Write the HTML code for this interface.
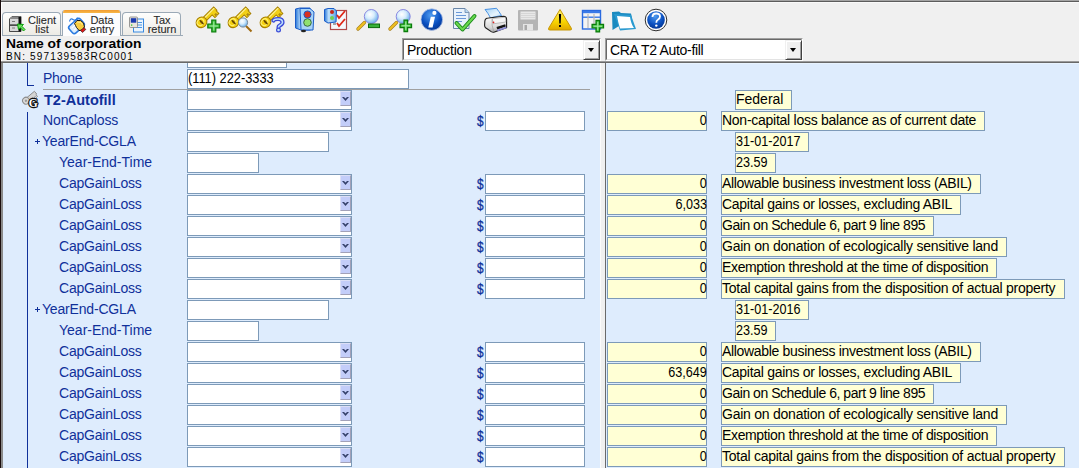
<!DOCTYPE html><html><head><meta charset="utf-8"><style>
*{margin:0;padding:0;box-sizing:border-box}
html,body{width:1079px;height:468px;overflow:hidden;background:#f0f0f0;font-family:"Liberation Sans",sans-serif;position:relative}
.a{position:absolute}
.lbl{position:absolute;color:#10309a;font-size:14px;line-height:18px;white-space:nowrap}
.inp{position:absolute;left:187px;background:#fff;border:1px solid #7d9ab8;height:20px;font-size:13px;line-height:17px;color:#000;white-space:nowrap}
.cmb{position:absolute;background:#fff;border:1px solid #7d9ab8;height:20px;width:165px;left:187px}
.cmb .btn{position:absolute;left:152px;top:0px;width:11px;height:15px;background:#c3cdf9;border-left:1px solid #dcdff6;border-top:1px solid #dcdff6;border-right:1px solid #a2a1b8;border-bottom:1px solid #a2a1b8}

.dol{position:absolute;left:477px;font-size:14.5px;font-weight:normal;-webkit-text-stroke:0.3px #10309a;color:#10309a;line-height:18px;transform:scaleX(0.82);transform-origin:0 0}
.usd{position:absolute;left:485px;width:100px;height:20px;background:#fff;border:1px solid #7d9ab8}
.yv{position:absolute;left:607px;width:100px;height:20px;background:#ffffd5;border:1px solid #7d9ab8;font-size:14px;line-height:16px;text-align:right;padding-right:0;color:#000}
.yl{position:absolute;height:20px;background:#ffffd5;border:1px solid #7d9ab8;font-size:14px;line-height:16px;padding-left:0;color:#000;white-space:nowrap}
.yd .s{display:inline-block;transform:scaleX(0.9);transform-origin:0 0}
.dd{position:absolute;top:38px;height:23px;border-top:1px solid #a0a0a0;border-left:1px solid #a0a0a0;border-right:1px solid #fff;border-bottom:1px solid #fff}
.dd .in{position:absolute;left:0;top:0;right:0;bottom:0;border-top:1px solid #696969;border-left:1px solid #696969;border-right:1px solid #e3e3e3;border-bottom:1px solid #e3e3e3;background:#fff;font-size:14px;line-height:18px;padding-left:3px;padding-top:1px;color:#000;white-space:nowrap}
.dd .b{position:absolute;right:-1px;top:0;width:17px;bottom:-1px;background:#f0f0f0;border-top:1px solid #f0f0f0;border-left:1px solid #f0f0f0;border-right:1px solid #404040;border-bottom:1px solid #404040;box-shadow:inset 1px 1px 0 #fff,inset -1px -1px 0 #a0a0a0}
.dd .b i{position:absolute;left:4px;top:7px;width:0;height:0;border-left:3.5px solid transparent;border-right:3.5px solid transparent;border-top:4px solid #000}
.tab{position:absolute;top:12px;height:24px;border:1px solid #9ba9b6;border-bottom:none;border-radius:4px 4px 0 0;background:linear-gradient(#fefefd,#eceae4)}
.tt{position:absolute;width:40px;text-align:center;font-size:11px;line-height:9px;color:#2a2a2a;white-space:nowrap;-webkit-text-stroke:0.1px #2a2a2a}
</style></head><body><div class="a" style="left:0;top:0;width:1079px;height:1px;background:#a4a4a4"></div><div class="a" style="left:0;top:1px;width:1079px;height:1px;background:#5c5c5c"></div><div class="a" style="left:0;top:2px;width:1079px;height:1px;background:#fafafa"></div><div class="tab" style="left:2px;width:59px"></div><div class="tab" style="left:122px;width:59px"></div><div class="a" style="left:2px;top:35px;width:181px;height:1px;background:#9ba9b6"></div><div class="tab" style="left:62px;top:10px;height:26px;width:59px;border-top:none;border-radius:3px 3px 0 0;background:#fdfdfe;overflow:hidden"><div class="a" style="left:0;top:0;width:57px;height:3px;background:linear-gradient(#f09a30,#f8b848)"></div></div><div class="tt" style="left:22px;top:16px">Client<br>list</div><div class="tt" style="left:82px;top:16px">Data<br>entry</div><div class="tt" style="left:142px;top:16px">Tax<br>return</div><div class="a" style="left:6px;top:37px;font-size:12.5px;font-weight:bold;color:#000;line-height:14px;white-space:nowrap;transform:scaleX(1.109);transform-origin:0 0">Name of corporation</div><div class="a" style="left:6px;top:51px;font-size:10px;color:#000;line-height:11px;white-space:nowrap;letter-spacing:1.15px;transform-origin:0 0">BN: 597139583RC0001</div><div class="dd" style="left:402px;width:199px"><div class="in"><span style="letter-spacing:-0.22px">Production</span><div class="b"><i></i></div></div></div><div class="dd" style="left:605px;width:198px"><div class="in"><span style="letter-spacing:-0.33px">CRA T2 Auto-fill</span><div class="b"><i></i></div></div></div><div class="a" style="left:0;top:61px;width:1079px;height:1px;background:#9a9a9a"></div><div class="a" style="left:0;top:62px;width:1079px;height:1px;background:#686868"></div><svg class="a" style="left:0;top:0" width="700" height="40" viewBox="0 0 700 40"><defs><radialGradient id="lens" cx=".4" cy=".35" r=".7"><stop offset="0" stop-color="#ffffff"/><stop offset=".45" stop-color="#d6ecfc"/><stop offset="1" stop-color="#5aa6e8"/></radialGradient><radialGradient id="blueball" cx=".45" cy=".3" r=".75"><stop offset="0" stop-color="#4f9cf0"/><stop offset=".6" stop-color="#0a4fc0"/><stop offset="1" stop-color="#06348c"/></radialGradient><linearGradient id="warn" x1="0" y1="0" x2="0" y2="1"><stop offset="0" stop-color="#fff27a"/><stop offset=".6" stop-color="#f8d400"/><stop offset="1" stop-color="#e0a800"/></linearGradient><linearGradient id="tl" x1="0" y1="0" x2="1" y2="0"><stop offset="0" stop-color="#2a78d8"/><stop offset=".35" stop-color="#bfe0fb"/><stop offset="1" stop-color="#5fa6e6"/></linearGradient><linearGradient id="paper" x1="0" y1="0" x2="1" y2="1"><stop offset="0" stop-color="#9fd0f6"/><stop offset=".6" stop-color="#e6f4fd"/><stop offset="1" stop-color="#bfe0f8"/></linearGradient><linearGradient id="pbody" x1="0" y1="0" x2="0" y2="1"><stop offset="0" stop-color="#ffffff"/><stop offset=".7" stop-color="#d8d8d8"/><stop offset="1" stop-color="#a8a8a8"/></linearGradient></defs><g transform="translate(201.5,22.3) rotate(-45)">
<path d="M3 -2.3 H19.5 V2.3 H18.5 V6 H16.3 V4 H15 V6.2 H12.8 V2.3 H3 Z" fill="#f2d018" stroke="#a88000" stroke-width="1"/>
<path d="M4 -1 H19" stroke="#fff39a" stroke-width="1.1"/>
<ellipse cx="0" cy="0" rx="5.6" ry="5.1" fill="#f4d010" stroke="#a88000" stroke-width="1.1"/>
<ellipse cx="-0.6" cy="-0.8" rx="3.6" ry="3" fill="none" stroke="#fff27a" stroke-width="1"/>
<ellipse cx="0.2" cy="0" rx="1.1" ry="2.9" fill="#6a4a00"/>
</g><path d="M211.8 20.0 H215.8 V24.0 H219.8 V28.0 H215.8 V32.0 H211.8 V28.0 H207.8 V24.0 H211.8 Z" fill="#3cc03c" stroke="#0a7a0a" stroke-width="1.2"/><path d="M213.8 21.5 V30.5 M209.3 26 H218.3" stroke="#c8f8c8" stroke-width="1" opacity=".8"/><g transform="translate(233.5,22.3) rotate(-45)">
<path d="M3 -2.3 H19.5 V2.3 H18.5 V6 H16.3 V4 H15 V6.2 H12.8 V2.3 H3 Z" fill="#f2d018" stroke="#a88000" stroke-width="1"/>
<path d="M4 -1 H19" stroke="#fff39a" stroke-width="1.1"/>
<ellipse cx="0" cy="0" rx="5.6" ry="5.1" fill="#f4d010" stroke="#a88000" stroke-width="1.1"/>
<ellipse cx="-0.6" cy="-0.8" rx="3.6" ry="3" fill="none" stroke="#fff27a" stroke-width="1"/>
<ellipse cx="0.2" cy="0" rx="1.1" ry="2.9" fill="#6a4a00"/>
</g><line x1="246" y1="26" x2="251.5" y2="31.5" stroke="#a06a10" stroke-width="2"/><circle cx="243" cy="22.5" r="4.6" fill="url(#lens)" stroke="#7a8a98" stroke-width="1"/><g transform="translate(265.5,22.3) rotate(-45)">
<path d="M3 -2.3 H19.5 V2.3 H18.5 V6 H16.3 V4 H15 V6.2 H12.8 V2.3 H3 Z" fill="#f2d018" stroke="#a88000" stroke-width="1"/>
<path d="M4 -1 H19" stroke="#fff39a" stroke-width="1.1"/>
<ellipse cx="0" cy="0" rx="5.6" ry="5.1" fill="#f4d010" stroke="#a88000" stroke-width="1.1"/>
<ellipse cx="-0.6" cy="-0.8" rx="3.6" ry="3" fill="none" stroke="#fff27a" stroke-width="1"/>
<ellipse cx="0.2" cy="0" rx="1.1" ry="2.9" fill="#6a4a00"/>
</g><path d="M273.5 20.5 Q274 19 278 19 Q282.5 19 282.5 22.3 Q282.5 24.2 280 25.3 Q278.5 26 278.5 27.3" fill="none" stroke="#3a4ad8" stroke-width="4.2" stroke-linecap="round"/><path d="M273.5 20.5 Q274 19 278 19 Q282.5 19 282.5 22.3 Q282.5 24.2 280 25.3 Q278.5 26 278.5 27.3" fill="none" stroke="#bfe0fb" stroke-width="1.6" stroke-linecap="round"/><circle cx="278.5" cy="30" r="1.9" fill="#bfe0fb" stroke="#3a4ad8" stroke-width="1.2"/><path d="M295.5 9 L300 8 L310 8 L310.5 30 L301 30 L295.5 28 Z" fill="url(#tl)" stroke="#1a5cc8" stroke-width="1"/><path d="M300 8.5 L310 8.5 L314 12 L313 30 L301 30 Z" fill="#a8d4f8" stroke="#1a5cc8" stroke-width="1"/><circle cx="307.5" cy="14.5" r="3.6" fill="#d83020" stroke="#1a5cc8" stroke-width="1"/><circle cx="307.5" cy="22.5" r="3.8" fill="#90e070" stroke="#3a6a40" stroke-width="1"/><ellipse cx="303.5" cy="31" rx="2.5" ry="1.3" fill="#222"/><rect x="330.5" y="10.5" width="16" height="19" fill="#f4f8fc" stroke="#b04848" stroke-width="1.2"/><path d="M324.5 9.5 L328 8.5 L334 8.5 L336.5 11 L336 22 L328 23 L324.5 21 Z" fill="url(#tl)" stroke="#1a5cc8" stroke-width="1"/><circle cx="332" cy="12" r="2" fill="#c82818"/><circle cx="332" cy="18" r="2" fill="#70d050"/><path d="M337 15 L339 18 L345 11 M337 23 L339 26 L345 19" fill="none" stroke="#e02818" stroke-width="1.8"/><path d="M333 24 H336" stroke="#505050" stroke-width="1"/><line x1="364.5" y1="22.5" x2="358" y2="29" stroke="#a88020" stroke-width="3.4" stroke-linecap="round"/><line x1="364.5" y1="22.5" x2="358" y2="29" stroke="#f0c020" stroke-width="2" stroke-linecap="round"/><circle cx="371.3" cy="16.5" r="7" fill="url(#lens)" stroke="#8a88e0" stroke-width="1"/><rect x="368.5" y="24" width="11" height="3.6" fill="#38b038" stroke="#0a6a0a" stroke-width="1"/><line x1="396.5" y1="22.5" x2="390" y2="29" stroke="#a88020" stroke-width="3.4" stroke-linecap="round"/><line x1="396.5" y1="22.5" x2="390" y2="29" stroke="#f0c020" stroke-width="2" stroke-linecap="round"/><circle cx="403.2" cy="16.5" r="7" fill="url(#lens)" stroke="#8a88e0" stroke-width="1"/><path d="M404.0 20.05 H407.6 V24.0 H411.55 V27.6 H407.6 V31.55 H404.0 V27.6 H400.05 V24.0 H404.0 Z" fill="#3cc03c" stroke="#0a7a0a" stroke-width="1.2"/><path d="M405.8 21.55 V30.05 M401.55 25.8 H410.05" stroke="#c8f8c8" stroke-width="1" opacity=".8"/><circle cx="431.8" cy="19.6" r="10.8" fill="url(#blueball)" stroke="#b8c8e8" stroke-width=".8"/><path d="M430.8 16.8 L435 16.8 L432.6 27.6 L428.3 27.6 Z" fill="#fff"/><circle cx="434.4" cy="12.9" r="2.1" fill="#fff"/><path d="M453.5 8.5 L465 8.5 L469 12.5 L469 28.5 L453.5 28.5 Z" fill="#e8f2fc" stroke="#6a86a8" stroke-width="1"/><path d="M465 8.5 L465 12.5 L469 12.5" fill="#b8d8f4" stroke="#6a86a8" stroke-width=".8"/><path d="M456 12.5 H462 M456 15.5 H466 M456 18.5 H466 M456 21.5 H462" stroke="#6a98d8" stroke-width="1"/><path d="M456.5 23 L462.5 29.5 L474.5 16" fill="none" stroke="#1a8a1a" stroke-width="4" stroke-linecap="round" stroke-linejoin="round"/><path d="M456.5 23 L462.5 29.5 L474.5 16" fill="none" stroke="#6ad850" stroke-width="2" stroke-linecap="round" stroke-linejoin="round"/><g transform="translate(480 4)"><path d="M5 5.5 L16.5 4.3 Q19 7.5 21.5 11.5 L10.5 13.8 Q8 9 5 5.5 Z" fill="url(#paper)" stroke="#3a88e0" stroke-width=".9"/><path d="M4.8 17.5 Q5 14.2 8.5 14 L23.5 12.3 Q26.5 12.3 26.6 15.5 L26.6 23.6 L14.5 28 Q12.8 28.6 11.2 27.6 L5.6 23.8 Q4.6 23 4.6 21.2 Z" fill="url(#pbody)" stroke="#1c1c1c" stroke-width="1.1"/><path d="M12.3 14.6 L24.3 13.3 Q25.6 13.5 25.7 15 L25.8 18 L13.2 19.8 Z" fill="#f6f6f6" stroke="#9a9a9a" stroke-width=".6"/><path d="M12 14.5 Q11.5 22 13.8 27.6" fill="none" stroke="#a0a0a0" stroke-width=".7"/><path d="M16.5 23 L25.2 20.3 L25.8 22.6 L17.3 25.6 Z" fill="#141414"/><path d="M17 25.8 L26 22.8 L26.6 24.3 L17.6 27.3 Z" fill="#8c8cdc"/><circle cx="13.5" cy="18.3" r=".9" fill="#e02020"/></g><rect x="518" y="10" width="20" height="20.5" rx="1" fill="#b4b4b4"/><rect x="520.5" y="11.5" width="15" height="8" fill="#e8e8e8"/><path d="M521 13.5 H535 M521 15.5 H535 M521 17.5 H535" stroke="#cfcfcf" stroke-width=".7"/><rect x="523" y="24" width="10" height="6.5" fill="#e4e4e4"/><rect x="524.5" y="25" width="2.5" height="5" fill="#a8a8a8"/><path d="M560 9.5 L571.5 28.5 Q572 30 570 30 L550 30 Q548 30 548.5 28.5 Z" fill="url(#warn)" stroke="#c89800" stroke-width="1" stroke-linejoin="round"/><path d="M558.9 14 H561.1 L560.7 23.5 H559.3 Z" fill="#000"/><rect x="559" y="25" width="2" height="2" fill="#000"/><rect x="582.5" y="10.5" width="18" height="18.5" fill="#f4f4f4" stroke="#2a6ae0" stroke-width="1.4"/><rect x="583" y="11" width="17" height="2.2" fill="#3a7ae8"/><rect x="583" y="16.5" width="17" height="1.4" fill="#3a7ae8"/><path d="M588 14 V28 M594 14 V28" stroke="#b8b8b8" stroke-width="1.2"/><path d="M596.0 20.45 H599.5999999999999 V24.4 H603.55 V28.0 H599.5999999999999 V31.95 H596.0 V28.0 H592.05 V24.4 H596.0 Z" fill="#3cc03c" stroke="#0a7a0a" stroke-width="1.2"/><path d="M597.8 21.95 V30.45 M593.55 26.2 H602.05" stroke="#c8f8c8" stroke-width="1" opacity=".8"/><path d="M612 12 L619 11.5 L621 13 L631 13.5 L632 18 L612.5 30 Z" fill="#1a8ac0"/><path d="M614 14 L631 15 L636 29 L620 30.5 Z" fill="#2a9ad0"/><path d="M617 16 L630 17 Q631 24 634 28 L620 28.5 Q618 22 617 16 Z" fill="#ffffff"/><circle cx="656" cy="20" r="10.8" fill="#fff" stroke="#303030" stroke-width="1"/><circle cx="656" cy="20" r="8.8" fill="url(#blueball)"/><path d="M652.5 17 Q652.5 13.5 656.3 13.5 Q660 13.5 660 16.6 Q660 18.5 657.8 19.8 Q656.3 20.6 656.3 22.8" fill="none" stroke="#fff" stroke-width="1.8"/><circle cx="656.3" cy="25.6" r="1.2" fill="#fff"/><path d="M9.5 19 L12 16.5 L21 16.5 L21 31.5 L9.5 31.5 Z" fill="#d8d8d8" stroke="#202020" stroke-width=".8"/><path d="M9.5 19 L12 16.5 L21 16.5 L19 19 Z" fill="#8a8a8a"/><rect x="18.5" y="17" width="2.5" height="14.5" fill="#101010"/><rect x="10" y="24.5" width="9" height="1.2" fill="#101010"/><rect x="12" y="21" width="3" height="1" fill="#7a7a7a"/><rect x="12" y="27.5" width="3" height="1" fill="#7a7a7a"/><path d="M17.5 24 L23.5 24.5 L21.8 26.2 L25 29.5 L23.5 31 L20.3 27.7 L18.5 29.5 Z" fill="#70e060" stroke="#0aa00a" stroke-width="1"/><path d="M69.5 21.5 Q70.5 17.5 73 19.5 Q75.5 21.5 77.5 17.5" fill="none" stroke="#2a7ae0" stroke-width="1.1"/><g transform="translate(76.5 26) rotate(-42)"><rect x="-7.5" y="-4.8" width="15" height="9.6" rx="2.5" fill="#dcecfb" stroke="#2a7ae0" stroke-width="1.6"/><path d="M-5 -1.5 H4 M-5 1.5 H4" stroke="#ffffff" stroke-width="1"/></g><path d="M74.5 23.5 L77 20.5 L80.5 20.5 L83.5 23 L84.5 27 L82.5 30 L79 30.5 L76.5 27.5 L75.5 25.5 Z" fill="#f8cc40" stroke="#1a1a1a" stroke-width="1"/><path d="M77 22 L81 22.5 L82.5 25" fill="none" stroke="#fff2a0" stroke-width=".8"/><path d="M80.5 30.5 L84 27.5 L85.8 29.5 L82.5 32.5 Z" fill="#e01818" stroke="#1a1a1a" stroke-width=".6"/><rect x="133.5" y="19" width="10" height="13" fill="#eaf4fc" stroke="#3a8ae0" stroke-width="1"/><path d="M136 22.5 H142 M136 25 H142 M136 27.5 H142" stroke="#3a8ae0" stroke-width=".9"/><rect x="129.5" y="17" width="8" height="10.5" rx="1" fill="#e8e4dc" stroke="#808080" stroke-width=".8"/><rect x="130.8" y="18.2" width="5.5" height="4.5" fill="#1a3ab0"/><rect x="131" y="24.5" width="1.3" height="1.2" fill="#20c020"/></svg><div class="a" style="left:0;top:63px;width:1079px;height:405px;overflow:hidden;background:#deecfd"><div class="a" style="left:0;top:-63px;width:1079px;height:468px"><div class="a" style="left:0;top:63px;width:1079px;height:1px;background:#e8f3fe"></div><div class="a" style="left:600px;top:63px;width:1px;height:405px;background:#fbfbfb"></div><div class="a" style="left:601px;top:63px;width:4px;height:405px;background:#f0f0f0"></div><div class="a" style="left:605px;top:63px;width:1px;height:405px;background:#6a6a6a"></div><div class="a" style="left:27px;top:63px;width:1px;height:23px;background:#10309a"></div><div class="a" style="left:27px;top:85px;width:7px;height:1px;background:#10309a"></div><div class="a" style="left:27px;top:112px;width:1px;height:356px;background:#10309a"></div><div class="inp" style="top:48px;width:100px"></div><div class="lbl" style="left:43px;top:69px;letter-spacing:-0.25px">Phone</div><div class="inp" style="top:69px;width:222px"><span style="display:inline-block;font-size:14px;transform:scaleX(0.915);transform-origin:0 0">(111) 222-3333</span></div><div class="a" style="left:43px;top:89px;width:547px;height:1px;background:#a0a0a0"></div><svg class="a" style="left:20px;top:88px" width="22" height="22" viewBox="0 0 22 22"><g transform="translate(6,12.7) rotate(-40)"><path d="M2 -1.8 H12.5 V1.8 H11.5 V4.2 H9.8 V2.8 H8.5 V4.2 H7 V1.8 H2 Z" fill="#d4d4d4" stroke="#8a8a8a" stroke-width="0.9"/><circle cx="0" cy="0" r="3.4" fill="#d8d8d8" stroke="#8a8a8a" stroke-width="1"/><circle cx="0" cy="0" r="1.2" fill="#9a9a9a"/></g><text x="13.2" y="18.6" font-family="Liberation Serif" font-weight="bold" font-size="11.5" text-anchor="middle" fill="#fff" stroke="#101010" stroke-width="2.4" paint-order="stroke" stroke-linejoin="round">G</text></svg><div class="lbl" style="left:44px;top:90px;font-weight:bold;font-size:14.5px;top:91px">T2-Autofill</div><div class="cmb" style="top:90px"><div class="btn"><svg width="7" height="4" viewBox="0 0 7 4" style="position:absolute;left:1px;top:5px"><path d="M0 0 H2 L3.5 1.6 L5 0 H7 L3.5 4 Z" fill="#34406a"/></svg></div></div><div class="yl " style="left:735px;top:90px;width:57px;letter-spacing:0px">Federal</div><div class="lbl" style="left:43px;top:111px;letter-spacing:-0.11px">NonCaploss</div><div class="cmb" style="top:111px"><div class="btn"><svg width="7" height="4" viewBox="0 0 7 4" style="position:absolute;left:1px;top:5px"><path d="M0 0 H2 L3.5 1.6 L5 0 H7 L3.5 4 Z" fill="#34406a"/></svg></div></div><div class="dol" style="top:112px">$</div><div class="usd" style="top:111px"></div><div class="yv" style="top:111px"><span style="display:inline-block;transform:scaleX(0.9);transform-origin:100% 0;position:relative;left:1px">0</span></div><div class="yl " style="left:721px;top:111px;width:264px;letter-spacing:-0.262px">Non-capital loss balance as of current date</div><div class="a" style="left:35px;top:141px;width:5px;height:1px;background:#10309a"></div><div class="a" style="left:37px;top:139px;width:1px;height:5px;background:#10309a"></div><div class="lbl" style="left:42px;top:132px;letter-spacing:-0.18px">YearEnd-CGLA</div><div class="inp" style="top:132px;width:142px"></div><div class="yl yd" style="left:735px;top:132px;width:74px;letter-spacing:0px"><span class="s">31-01-2017</span></div><div class="lbl" style="left:59px;top:153px;">Year-End-Time</div><div class="inp" style="top:153px;width:72px"></div><div class="yl yd" style="left:735px;top:153px;width:41px;letter-spacing:0px"><span class="s">23.59</span></div><div class="lbl" style="left:59px;top:174px;letter-spacing:-0.2px">CapGainLoss</div><div class="cmb" style="top:174px"><div class="btn"><svg width="7" height="4" viewBox="0 0 7 4" style="position:absolute;left:1px;top:5px"><path d="M0 0 H2 L3.5 1.6 L5 0 H7 L3.5 4 Z" fill="#34406a"/></svg></div></div><div class="dol" style="top:175px">$</div><div class="usd" style="top:174px"></div><div class="yv" style="top:174px"><span style="display:inline-block;transform:scaleX(0.9);transform-origin:100% 0;position:relative;left:1px">0</span></div><div class="yl " style="left:721px;top:174px;width:260px;letter-spacing:-0.325px">Allowable business investment loss (ABIL)</div><div class="lbl" style="left:59px;top:195px;letter-spacing:-0.2px">CapGainLoss</div><div class="cmb" style="top:195px"><div class="btn"><svg width="7" height="4" viewBox="0 0 7 4" style="position:absolute;left:1px;top:5px"><path d="M0 0 H2 L3.5 1.6 L5 0 H7 L3.5 4 Z" fill="#34406a"/></svg></div></div><div class="dol" style="top:196px">$</div><div class="usd" style="top:195px"></div><div class="yv" style="top:195px"><span style="display:inline-block;transform:scaleX(0.9);transform-origin:100% 0;position:relative;left:1px">6,033</span></div><div class="yl " style="left:721px;top:195px;width:240px;letter-spacing:-0.289px">Capital gains or losses, excluding ABIL</div><div class="lbl" style="left:59px;top:216px;letter-spacing:-0.2px">CapGainLoss</div><div class="cmb" style="top:216px"><div class="btn"><svg width="7" height="4" viewBox="0 0 7 4" style="position:absolute;left:1px;top:5px"><path d="M0 0 H2 L3.5 1.6 L5 0 H7 L3.5 4 Z" fill="#34406a"/></svg></div></div><div class="dol" style="top:217px">$</div><div class="usd" style="top:216px"></div><div class="yv" style="top:216px"><span style="display:inline-block;transform:scaleX(0.9);transform-origin:100% 0;position:relative;left:1px">0</span></div><div class="yl " style="left:721px;top:216px;width:213px;letter-spacing:-0.47px">Gain on Schedule 6, part 9 line 895</div><div class="lbl" style="left:59px;top:237px;letter-spacing:-0.2px">CapGainLoss</div><div class="cmb" style="top:237px"><div class="btn"><svg width="7" height="4" viewBox="0 0 7 4" style="position:absolute;left:1px;top:5px"><path d="M0 0 H2 L3.5 1.6 L5 0 H7 L3.5 4 Z" fill="#34406a"/></svg></div></div><div class="dol" style="top:238px">$</div><div class="usd" style="top:237px"></div><div class="yv" style="top:237px"><span style="display:inline-block;transform:scaleX(0.9);transform-origin:100% 0;position:relative;left:1px">0</span></div><div class="yl " style="left:721px;top:237px;width:286px;letter-spacing:-0.239px">Gain on donation of ecologically sensitive land</div><div class="lbl" style="left:59px;top:258px;letter-spacing:-0.2px">CapGainLoss</div><div class="cmb" style="top:258px"><div class="btn"><svg width="7" height="4" viewBox="0 0 7 4" style="position:absolute;left:1px;top:5px"><path d="M0 0 H2 L3.5 1.6 L5 0 H7 L3.5 4 Z" fill="#34406a"/></svg></div></div><div class="dol" style="top:259px">$</div><div class="usd" style="top:258px"></div><div class="yv" style="top:258px"><span style="display:inline-block;transform:scaleX(0.9);transform-origin:100% 0;position:relative;left:1px">0</span></div><div class="yl " style="left:721px;top:258px;width:276px;letter-spacing:-0.356px">Exemption threshold at the time of disposition</div><div class="lbl" style="left:59px;top:279px;letter-spacing:-0.2px">CapGainLoss</div><div class="cmb" style="top:279px"><div class="btn"><svg width="7" height="4" viewBox="0 0 7 4" style="position:absolute;left:1px;top:5px"><path d="M0 0 H2 L3.5 1.6 L5 0 H7 L3.5 4 Z" fill="#34406a"/></svg></div></div><div class="dol" style="top:280px">$</div><div class="usd" style="top:279px"></div><div class="yv" style="top:279px"><span style="display:inline-block;transform:scaleX(0.9);transform-origin:100% 0;position:relative;left:1px">0</span></div><div class="yl " style="left:721px;top:279px;width:344px;letter-spacing:-0.259px">Total capital gains from the disposition of actual property</div><div class="a" style="left:35px;top:309px;width:5px;height:1px;background:#10309a"></div><div class="a" style="left:37px;top:307px;width:1px;height:5px;background:#10309a"></div><div class="lbl" style="left:42px;top:300px;letter-spacing:-0.18px">YearEnd-CGLA</div><div class="inp" style="top:300px;width:142px"></div><div class="yl yd" style="left:735px;top:300px;width:74px;letter-spacing:0px"><span class="s">31-01-2016</span></div><div class="lbl" style="left:59px;top:321px;">Year-End-Time</div><div class="inp" style="top:321px;width:72px"></div><div class="yl yd" style="left:735px;top:321px;width:41px;letter-spacing:0px"><span class="s">23.59</span></div><div class="lbl" style="left:59px;top:342px;letter-spacing:-0.2px">CapGainLoss</div><div class="cmb" style="top:342px"><div class="btn"><svg width="7" height="4" viewBox="0 0 7 4" style="position:absolute;left:1px;top:5px"><path d="M0 0 H2 L3.5 1.6 L5 0 H7 L3.5 4 Z" fill="#34406a"/></svg></div></div><div class="dol" style="top:343px">$</div><div class="usd" style="top:342px"></div><div class="yv" style="top:342px"><span style="display:inline-block;transform:scaleX(0.9);transform-origin:100% 0;position:relative;left:1px">0</span></div><div class="yl " style="left:721px;top:342px;width:260px;letter-spacing:-0.325px">Allowable business investment loss (ABIL)</div><div class="lbl" style="left:59px;top:363px;letter-spacing:-0.2px">CapGainLoss</div><div class="cmb" style="top:363px"><div class="btn"><svg width="7" height="4" viewBox="0 0 7 4" style="position:absolute;left:1px;top:5px"><path d="M0 0 H2 L3.5 1.6 L5 0 H7 L3.5 4 Z" fill="#34406a"/></svg></div></div><div class="dol" style="top:364px">$</div><div class="usd" style="top:363px"></div><div class="yv" style="top:363px"><span style="display:inline-block;transform:scaleX(0.9);transform-origin:100% 0;position:relative;left:1px">63,649</span></div><div class="yl " style="left:721px;top:363px;width:240px;letter-spacing:-0.289px">Capital gains or losses, excluding ABIL</div><div class="lbl" style="left:59px;top:384px;letter-spacing:-0.2px">CapGainLoss</div><div class="cmb" style="top:384px"><div class="btn"><svg width="7" height="4" viewBox="0 0 7 4" style="position:absolute;left:1px;top:5px"><path d="M0 0 H2 L3.5 1.6 L5 0 H7 L3.5 4 Z" fill="#34406a"/></svg></div></div><div class="dol" style="top:385px">$</div><div class="usd" style="top:384px"></div><div class="yv" style="top:384px"><span style="display:inline-block;transform:scaleX(0.9);transform-origin:100% 0;position:relative;left:1px">0</span></div><div class="yl " style="left:721px;top:384px;width:213px;letter-spacing:-0.47px">Gain on Schedule 6, part 9 line 895</div><div class="lbl" style="left:59px;top:405px;letter-spacing:-0.2px">CapGainLoss</div><div class="cmb" style="top:405px"><div class="btn"><svg width="7" height="4" viewBox="0 0 7 4" style="position:absolute;left:1px;top:5px"><path d="M0 0 H2 L3.5 1.6 L5 0 H7 L3.5 4 Z" fill="#34406a"/></svg></div></div><div class="dol" style="top:406px">$</div><div class="usd" style="top:405px"></div><div class="yv" style="top:405px"><span style="display:inline-block;transform:scaleX(0.9);transform-origin:100% 0;position:relative;left:1px">0</span></div><div class="yl " style="left:721px;top:405px;width:286px;letter-spacing:-0.239px">Gain on donation of ecologically sensitive land</div><div class="lbl" style="left:59px;top:426px;letter-spacing:-0.2px">CapGainLoss</div><div class="cmb" style="top:426px"><div class="btn"><svg width="7" height="4" viewBox="0 0 7 4" style="position:absolute;left:1px;top:5px"><path d="M0 0 H2 L3.5 1.6 L5 0 H7 L3.5 4 Z" fill="#34406a"/></svg></div></div><div class="dol" style="top:427px">$</div><div class="usd" style="top:426px"></div><div class="yv" style="top:426px"><span style="display:inline-block;transform:scaleX(0.9);transform-origin:100% 0;position:relative;left:1px">0</span></div><div class="yl " style="left:721px;top:426px;width:276px;letter-spacing:-0.356px">Exemption threshold at the time of disposition</div><div class="lbl" style="left:59px;top:447px;letter-spacing:-0.2px">CapGainLoss</div><div class="cmb" style="top:447px"><div class="btn"><svg width="7" height="4" viewBox="0 0 7 4" style="position:absolute;left:1px;top:5px"><path d="M0 0 H2 L3.5 1.6 L5 0 H7 L3.5 4 Z" fill="#34406a"/></svg></div></div><div class="dol" style="top:448px">$</div><div class="usd" style="top:447px"></div><div class="yv" style="top:447px"><span style="display:inline-block;transform:scaleX(0.9);transform-origin:100% 0;position:relative;left:1px">0</span></div><div class="yl " style="left:721px;top:447px;width:344px;letter-spacing:-0.259px">Total capital gains from the disposition of actual property</div></div></div><div class="a" style="left:0;top:0;width:1px;height:468px;background:#1a0d0d"></div><div class="a" style="left:1px;top:63px;width:2px;height:405px;background:#8a8a8a"></div><div class="a" style="left:1px;top:3px;width:1px;height:58px;background:#fff"></div></body></html>
